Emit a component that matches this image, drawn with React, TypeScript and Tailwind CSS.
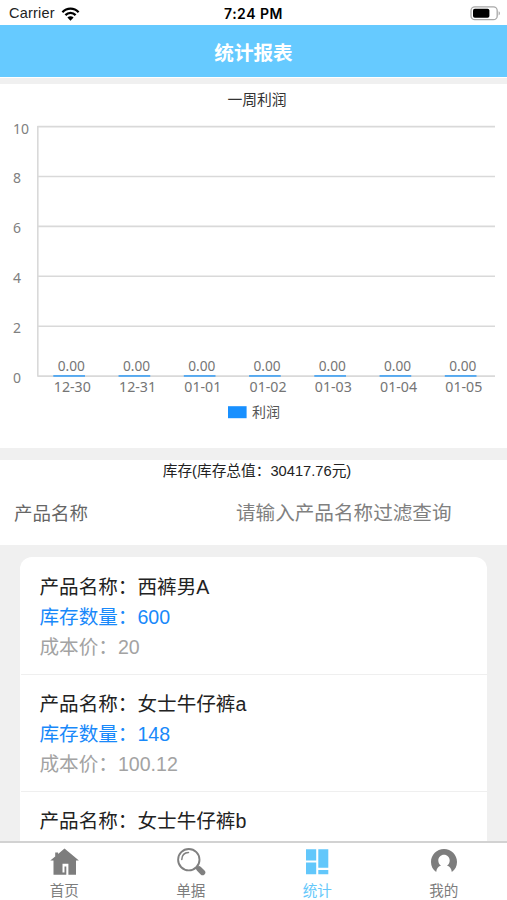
import type { ReactNode } from "react"
import clsx from "clsx"

interface IProduct {
  name: string
  qty?: string
  cost?: string
}

interface ITab {
  label: string
  icon: ReactNode
  active?: boolean
}

const days = ["12-30", "12-31", "01-01", "01-02", "01-03", "01-04", "01-05"]
const ticks = [10, 8, 6, 4, 2, 0]

const products: IProduct[] = [
  { name: "西裤男A", qty: "600", cost: "20" },
  { name: "女士牛仔裤a", qty: "148", cost: "100.12" },
  { name: "女士牛仔裤b" },
]

const tabs: ITab[] = [
  {
    label: "首页",
    icon: (
      <svg width="30" height="28" viewBox="0 0 30 28" fill="#7d7d7d">
        <path fillRule="evenodd" d="M15.5 0.6 29.9 12.6H27V26.7H19.4V15.7H13.5V24.5H15.5V18.5H17.3V26.7H4.5V12.6H1.3L6.2 8.4V4.4H9.1V6Z" />
      </svg>
    ),
  },
  {
    label: "单据",
    icon: (
      <svg width="30" height="28" viewBox="0 0 30 28" fill="none" stroke="#808080">
        <circle cx="12.8" cy="11.7" r="10.7" strokeWidth="1.9" />
        <path d="M5.8 11.5C6 7.5 8.6 4.8 12.5 4.6" strokeWidth="1.5" strokeLinecap="round" />
        <path d="M19.8 18.9 22 21" strokeWidth="2.5" />
        <path d="M23 20.8 26.6 24.5" strokeWidth="5.4" strokeLinecap="round" />
      </svg>
    ),
  },
  {
    label: "统计",
    active: true,
    icon: (
      <svg width="30" height="28" viewBox="0 0 30 28" fill="#62c7fb">
        <path d="M4 1.2h10.2v11.2H4zM16.3 1.2h10v18.6h-10zM4 14.6h10.2v11.6H4zM16.3 22h10v4.2h-10z" />
      </svg>
    ),
  },
  {
    label: "我的",
    icon: (
      <svg width="30" height="28" viewBox="0 0 30 28" fill="#7d7d7d">
        <path d="M7.2 24C3.8 21.7 2 18 2 14 2 6.8 7.8 1 15 1s13 5.8 13 13c0 4-1.800 7.700-5.200 10-.4-3.200-1.600-5.300-4.800-6.400 1.700-1.200 2.700-3 2.700-5.200 0-3.200-2.500-5.700-5.700-5.700s-5.700 2.500-5.700 5.700c0 2.200 1 4 2.700 5.200-3.200 1.100-4.400 3.200-4.800 6.400Z" />
      </svg>
    ),
  },
]

function StatusBar() {
  return (
    <div className="flex h-[25px] shrink-0 items-center justify-between bg-white pl-[9px] pr-[6px] pt-[2px] text-[14.5px] text-[#222]">
      <div className="flex w-[110px] items-center gap-[6px]">
        <span className="tracking-[0.2px]">Carrier</span>
        <svg width="19" height="14" viewBox="0 0 18 14" fill="none" stroke="#000" strokeWidth="2.3">
          <path d="M0.9 5.2C5.4 0.5 12.6 0.5 17.1 5.2" />
          <path d="M3.9 8.1C6.8 5.2 11.2 5.2 14.1 8.1" />
          <path d="M9 13.7 5.9 10.5C7.7 8.9 10.3 8.9 12.1 10.5Z" fill="#000" stroke="none" />
        </svg>
      </div>
      <span className="mr-[3px] font-[Inter] text-[14px] font-semibold tracking-[0.5px] text-black">7:24 PM</span>
      <div className="flex w-[110px] justify-end">
        <svg width="31" height="15" viewBox="0 0 31 15">
          <rect x="1" y="0.9" width="26.2" height="12.8" rx="3.8" fill="#fff" stroke="#a8a8a8" strokeWidth="1.3" />
          <rect x="3" y="2.8" width="16.4" height="9" rx="1.8" fill="#000" />
          <path d="M28.6 5.2c1.8.7 1.8 3.5 0 4.2Z" fill="#a8a8a8" />
        </svg>
      </div>
    </div>
  )
}

function ProfitChart() {
  return (
    <svg width="507" height="340" viewBox="0 108 507 340" className="block font-['Noto_Sans','Noto_Sans_CJK_SC',sans-serif]">
      {ticks.map((t, i) => (
        <g key={t}>
          <path d={`M37.5 ${126.6 + i * 49.9}H495`} stroke="#d9d9d9" strokeWidth="1.6" />
          <text x="13" y={133.5 + i * 49.9} fontSize="14" fill="#808080">{t}</text>
        </g>
      ))}
      <path d="M37.8 126V376.5" stroke="#d9d9d9" strokeWidth="1.6" />
      {days.map((d, i) => (
        <g key={d} fill="#757575">
          <rect x={53.3 + i * 65.25} y="375" width="31.7" height="1.9" fill="#55a9f0" />
          <text x={71.3 + i * 65.25} y="371.3" fontSize="13.7" textAnchor="middle">0.00</text>
          <text x={72.3 + i * 65.25} y="391.5" fontSize="14.2" textAnchor="middle">{d}</text>
        </g>
      ))}
      <rect x="228" y="406.2" width="18.6" height="12" fill="#1890ff" />
      <text x="252" y="417.3" fontSize="14" fill="#555">利润</text>
    </svg>
  )
}

function ProductItem({ name, qty, cost }: IProduct) {
  return (
    <div className="h-[117px] border-b border-[#efefef] px-[19px] pt-[14px] text-[19.6px] leading-[30px]">
      <p className="text-[#222]">产品名称：{name}</p>
      {qty && <p className="text-[#1989fa]">库存数量：{qty}</p>}
      {cost && <p className="text-[#a3a3a3]">成本价：{cost}</p>}
    </div>
  )
}

function TabBar() {
  return (
    <div className="flex h-[59px] shrink-0 border-t-2 border-[#d2d2d2] bg-white pl-px">
      {tabs.map((tab) => (
        <div
          key={tab.label}
          className={clsx(
            "flex flex-1 flex-col items-center gap-1 pt-[5px] text-[14.6px] leading-[22px]",
            tab.active ? "text-[#66c8fa]" : "text-[#7d7d7d]"
          )}
        >
          <div className="h-7">{tab.icon}</div>
          <span>{tab.label}</span>
        </div>
      ))}
    </div>
  )
}

function App() {
  return (
    <div className="flex h-[900px] w-[507px] flex-col overflow-hidden bg-[#f0f0f0] font-['Liberation_Sans','Noto_Sans_CJK_SC',sans-serif]">
      <StatusBar />
      <div className="flex h-[53px] shrink-0 items-center justify-center border-b border-white bg-[#66caff] pt-[5px] text-[19.6px] font-bold text-white">
        统计报表
      </div>

      <div className="mt-[6px] h-[364px] shrink-0 bg-white">
        <div className="h-6 pl-[7px] pt-1 text-center text-[14.8px] leading-6 text-[#333]">一周利润</div>
        <ProfitChart />
      </div>

      <div className="mt-3 h-[85px] shrink-0 bg-white">
        <div className="h-[22px] pl-[7px] text-center text-[14.7px] leading-[22px] text-[#222]">
          库存(库存总值：30417.76元)
        </div>
        <div className="flex h-[60px] items-center pl-[14px]">
          <span className="w-[222px] pt-[3px] text-[18.5px] text-[#666]">产品名称</span>
          <input
            className="w-[250px] pt-[3px] text-[19.6px] outline-none placeholder:text-[#808080]"
            placeholder="请输入产品名称过滤查询"
          />
        </div>
      </div>

      <div className="min-h-0 flex-1 overflow-hidden px-5 pt-3">
        <div className="rounded-[12px] bg-white pl-[0.5px] pt-px">
          {products.map((p) => (
            <ProductItem key={p.name} {...p} />
          ))}
        </div>
      </div>
      <TabBar />
    </div>
  )
}

export default App
